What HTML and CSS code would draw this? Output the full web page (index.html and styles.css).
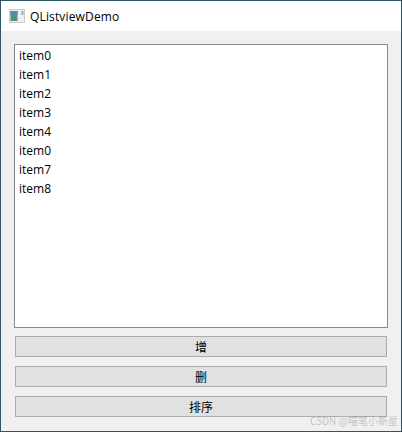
FILE: index.html
```html
<!DOCTYPE html>
<html lang="zh">
<head>
  <meta charset="UTF-8" />
  <title>QListviewDemo</title>
  <link rel="stylesheet" href="styles.css">
</head>
<body>
  <div class="window">
    <div class="titlebar">
      <svg class="app-icon" width="16" height="16" viewBox="0 0 16 16">
        <rect x="0.5" y="1.5" width="15" height="13" fill="#eef0f0" stroke="#c9cccc"/>
        <rect x="1.5" y="3" width="7" height="10" fill="#4f9184"/>
        <rect x="1.5" y="3" width="7" height="4" fill="#5e8a9c"/>
        <rect x="12.5" y="3" width="2" height="4" fill="#8fb0c8"/>
      </svg>
      <span class="title">QListviewDemo</span>
    </div>
    <div class="content">
      <div class="list">
        <div class="item">item0</div>
        <div class="item">item1</div>
        <div class="item">item2</div>
        <div class="item">item3</div>
        <div class="item">item4</div>
        <div class="item">item0</div>
        <div class="item">item7</div>
        <div class="item">item8</div>
      </div>
      <div class="buttons">
        <button>增</button>
        <button>删</button>
        <button>排序</button>
      </div>
    </div>
    <div class="watermark">CSDN @喵笔小新星</div>
  </div>
</body>
</html>
```

FILE: styles.css
```css
html, body {
  margin: 0;
  height: 100%;
}

body {
  font-family: 'Noto Sans CJK SC', 'Open Sans', sans-serif;
}

.window {
  position: relative;
  box-sizing: border-box;
  width: 402px;
  height: 432px;
  border: 1px solid #2e5568;
  display: flex;
  flex-direction: column;
  background: #f0f0f0;
}

.titlebar {
  height: 30px;
  background: #fff;
  display: flex;
  align-items: center;
  padding-left: 8px;
  gap: 5px;
  flex-shrink: 0;
}

.title {
  font-family: 'Open Sans', 'Noto Sans', sans-serif;
  font-size: 12px;
  letter-spacing: 0.15px;
  color: #000;
}

.content {
  flex: 1;
  padding: 13px 13px 14px 13px;
  display: flex;
  flex-direction: column;
}

.list {
  box-sizing: border-box;
  height: 284px;
  border: 1px solid #828790;
  background: #fff;
  padding: 1px 4px;
}

.item {
  height: 19px;
  line-height: 19px;
  font-family: 'Open Sans', 'Noto Sans', sans-serif;
  font-size: 12px;
  color: #000;
}

.buttons {
  display: flex;
  flex-direction: column;
  gap: 9px;
  margin-top: 8px;
  padding: 0 1px;
}

button {
  box-sizing: border-box;
  height: 21px;
  border: 1px solid #adadad;
  background: #e1e1e1;
  font-family: 'Noto Sans CJK SC', sans-serif;
  font-size: 12px;
  color: #000;
  padding: 0;
}

.watermark {
  position: absolute;
  right: 3px;
  bottom: 3px;
  font-size: 10px;
  color: rgba(120, 120, 120, 0.4);
  white-space: nowrap;
}
```
